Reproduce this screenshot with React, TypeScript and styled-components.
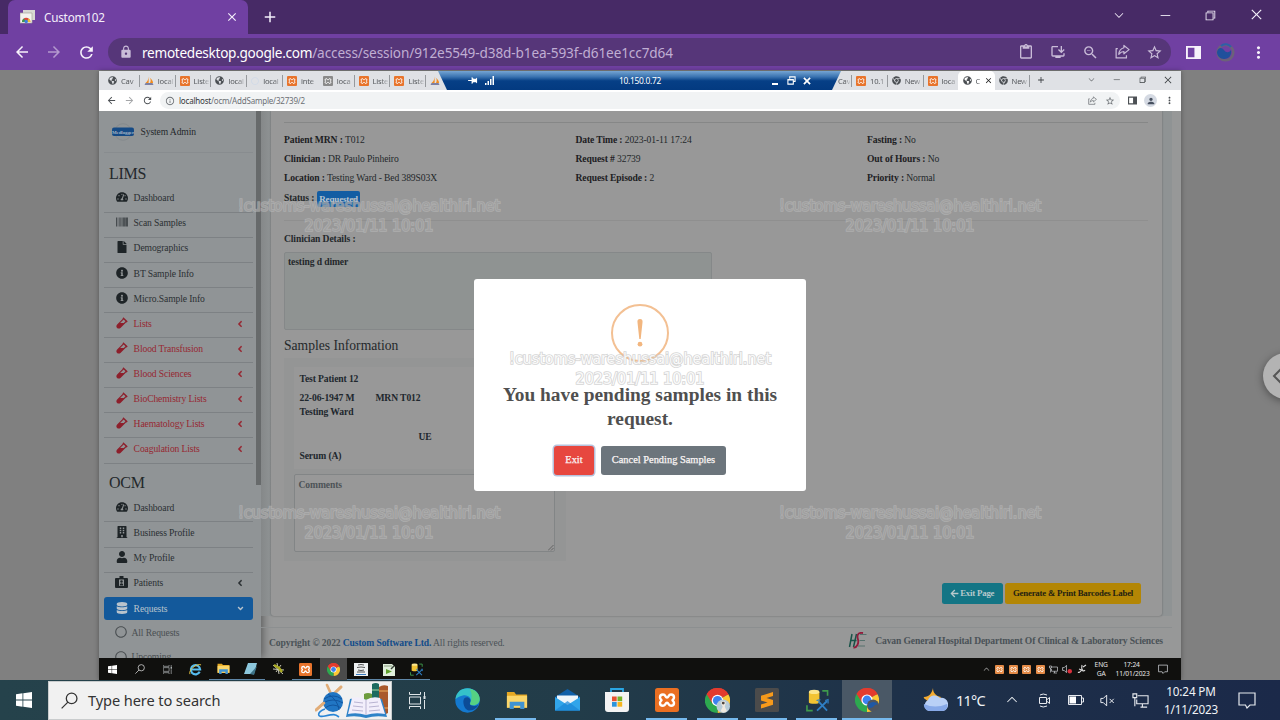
import React from 'react';
import styled, { createGlobalStyle, css } from 'styled-components';
import {
  FaTachometerAlt, FaBarcode, FaFile, FaInfoCircle, FaVial, FaBuilding, FaUser,
  FaDatabase, FaRegCircle, FaAngleLeft, FaAngleDown, FaArrowLeft, FaGlobeAmericas, FaChrome,
} from 'react-icons/fa';
import {
  MdArrowBack, MdArrowForward, MdRefresh, MdLock, MdContentPaste, MdInstallDesktop, MdZoomOut,
  MdStarBorder, MdMoreVert, MdClose, MdAdd, MdInfoOutline, MdPerson, MdPushPin,
} from 'react-icons/md';
import { VscChromeClose, VscChromeMinimize, VscChromeRestore, VscChevronDown, VscChevronUp } from 'react-icons/vsc';

const GlobalStyle = createGlobalStyle`
  *, *::before, *::after { box-sizing: border-box; }
  body { margin: 0; background: #808080; overflow: hidden; }
  svg { display: block; flex: none; }
`;

const ui = `"Noto Sans", "Open Sans", sans-serif`;
const serif = `"Liberation Serif", "Times New Roman", serif`;

const Screen = styled.div`
  position: relative;
  display: flex;
  flex-direction: column;
  width: 1280px;
  height: 720px;
  overflow: hidden;
  background: #808080;
  font-family: ${ui};
  white-space: nowrap;
`;

/* ---------- outer browser ---------- */
const TabStrip = styled.div`
  display: flex;
  height: 34px;
  padding-left: 8px;
  background: #472a66;
  color: #f4effa;
`;
const BrowserTab = styled.div`
  display: flex;
  align-items: center;
  width: 240px;
  padding: 0 9px 0 12px;
  border-radius: 7px 7px 0 0;
  background: #7040a2;
  font-size: 11.7px;
  letter-spacing: -0.2px;
`;
const TabTitle = styled.span`
  flex: 1;
  margin-left: 9px;
`;
const NewTab = styled.div`
  display: flex;
  align-items: center;
  margin-left: 13px;
`;
const WindowButtons = styled.div`
  display: flex;
  flex: 1;
  align-items: center;
  justify-content: flex-end;
  padding: 0 16px 5px 0;
  gap: 31.6px;
`;
const Toolbar = styled.div`
  display: flex;
  align-items: center;
  height: 36px;
  padding-left: 13px;
  background: #7040a2;
  color: #f7f2fb;
`;
const NavButtons = styled.div`
  display: flex;
  gap: 14px;
  width: 95px;
`;
const Dim = styled.span`
  opacity: 0.5;
`;
const Omnibox = styled.div`
  display: flex;
  align-items: center;
  width: 1063px;
  height: 28px;
  padding: 0 8px 0 11px;
  border-radius: 14px;
  background: #563679;
  color: #c9bcd8;
`;
const Url = styled.span`
  flex: 1;
  margin-left: 9px;
  font-size: 13.6px;
  letter-spacing: -0.12px;
  color: #c0aed3;
  b { font-weight: 400; color: #fff; letter-spacing: -0.28px; }
`;
const OmniIcons = styled.div`
  display: flex;
  gap: 16px;
`;
const ToolbarEnd = styled.div`
  display: flex;
  align-items: center;
  margin-left: 15px;
  gap: 14.5px;
`;

/* ---------- remote session ---------- */
const Session = styled.div`
  display: flex;
  height: 610px;
  padding: 1px 0 0 99px;
  background: #808080;
`;
const Remote = styled.div`
  display: flex;
  flex-direction: column;
  width: 1082px;
  height: 609px;
  box-shadow: 0 0 5px rgba(0, 0, 0, 0.35);
`;
const RemoteTabs = styled.div`
  display: flex;
  height: 19px;
  background: #dfe1e5;
  color: #55585c;
  font-size: 7.6px;
`;
const RemoteTab = styled.div<{ $w?: number; $active?: boolean; $line?: boolean; $tucked?: boolean }>`
  display: flex;
  flex: none;
  align-items: center;
  width: ${p => p.$w ?? 35.8}px;
  padding-left: ${p => (p.$tucked ? 0 : 4)}px;
  gap: 3px;
  ${p => p.$active && css`background: #fff; border-radius: 5px 5px 0 0; padding-left: 5px;`}
  span {
    flex: 1;
    min-width: 0;
    margin-left: ${p => (p.$tucked ? -3 : 1)}px;
    letter-spacing: -0.2px;
    -webkit-mask-image: linear-gradient(90deg, #000 55%, rgba(0, 0, 0, 0.15) 100%);
  }
  &::after {
    content: '';
    width: 1px;
    height: 12px;
    margin-left: -2px;
    background: ${p => (p.$line === false ? 'transparent' : '#96999d')};
  }
`;
const TabGroup = styled.div`
  display: flex;
  width: 339px;
  padding-left: 5px;
`;
const RdpBar = styled.div`
  display: flex;
  align-items: center;
  flex: none;
  width: 403px;
  height: 19px;
  padding: 0 30px 0 29px;
  background: linear-gradient(#76a5d3 0%, #3b74b1 30%, #063f86 52%, #033a80 100%);
  clip-path: polygon(0 0, 100% 0, calc(100% - 9px) 100%, 9px 100%);
  color: #fff;
`;
const RdpPin = styled.div`
  display: flex;
  align-items: center;
  width: 48px;
  gap: 7px;
  svg:first-child { transform: rotate(90deg); }
`;
const RdpTitle = styled.div`
  flex: 1;
  padding-right: 6px;
  text-align: center;
  font-size: 8.4px;
  letter-spacing: -0.3px;
`;
const RdpButtons = styled.div`
  display: flex;
  align-items: center;
  gap: 7.5px;
`;
const RemoteWindowButtons = styled.div`
  display: flex;
  flex: 1;
  align-items: center;
  justify-content: flex-end;
  gap: 16.5px;
  padding: 0 8px 2px 6px;
  color: #3c4043;
  svg:first-child { margin-right: auto; }
`;
const RemoteToolbar = styled.div`
  display: flex;
  align-items: center;
  height: 21px;
  padding-left: 7px;
  background: #fff;
  color: #4c5054;
`;
const RemoteNav = styled.div`
  display: flex;
  width: 54px;
  gap: 7px;
`;
const RemoteOmni = styled.div`
  display: flex;
  align-items: center;
  width: 960px;
  height: 17px;
  padding: 0 5px;
  border-radius: 9px;
  background: #f1f3f4;
  font-size: 8px;
  color: #6c7074;
`;
const RemoteUrl = styled.span`
  flex: 1;
  margin-left: 4px;
  letter-spacing: -0.2px;
  b { font-weight: 400; color: #33373a; }
`;
const RemoteOmniIcons = styled.div`
  display: flex;
  gap: 8px;
`;
const RemoteEnd = styled.div`
  display: flex;
  align-items: center;
  margin-left: 8px;
  gap: 7px;
`;
const Avatar = styled.div`
  display: flex;
  align-items: center;
  justify-content: center;
  width: 13px;
  height: 13px;
  border-radius: 50%;
  background: #d5dae3;
  color: #47505f;
`;

/* ---------- application ---------- */
const Page = styled.div`
  display: flex;
  height: 547px;
  overflow: hidden;
  background: #979898;
  font-family: ${serif};
  font-size: 9.6px;
  letter-spacing: -0.11px;
  color: #24282b;
`;
const Sidebar = styled.div`
  display: flex;
  width: 162px;
  height: 547px;
  overflow: hidden;
  background: #909496;
  box-shadow: 2px 0 8px rgba(0, 0, 0, 0.4);
`;
const Menu = styled.div`
  width: 157px;
  padding: 0 3px 0 5px;
`;
const ScrollThumb = styled.div`
  width: 5px;
  height: 374px;
  background: #676a6b;
`;
const UserRow = styled.div`
  display: flex;
  align-items: center;
  height: 42px;
  padding-left: 8px;
  gap: 6.5px;
  border-bottom: 1px solid #888c8f;
`;
const MenuHeading = styled.div<{ $h: number }>`
  display: flex;
  align-items: flex-end;
  height: ${p => p.$h}px;
  padding: 0 0 5px 5px;
  line-height: 18px;
  font-size: 16px;
  letter-spacing: -0.3px;
`;
const MenuItem = styled.div<{ $red?: boolean; $active?: boolean; $plain?: boolean }>`
  display: flex;
  align-items: center;
  height: 25.1px;
  padding: 0 8px 4.6px 11px;
  border-bottom: 1px solid ${p => (p.$plain ? 'transparent' : '#7d8184')};
  color: ${p => (p.$red ? '#972731' : '#2b3033')};
  ${p => p.$active && css`
    height: 22.5px;
    margin-top: -0.5px;
    padding-bottom: 1px;
    border: 0;
    border-radius: 3px;
    background: #13599b;
    color: #b9c3cc;
  `}
`;
const MenuIcon = styled.span<{ $color?: string }>`
  display: flex;
  justify-content: center;
  width: 13px;
  margin-right: 5.6px;
  color: ${p => p.$color ?? '#1e2427'};
`;
const MenuText = styled.span`
  flex: 1;
  padding-top: 1px;
`;
const MenuArrow = styled.span`
  padding-top: 2px;
`;
const SubItem = styled.div`
  display: flex;
  align-items: center;
  height: 24.5px;
  padding: 1px 0 0 11px;
  gap: 4.5px;
  color: #4a4f52;
`;
const Main = styled.div`
  display: flex;
  flex: 1;
  flex-direction: column;
`;
const CardArea = styled.div`
  width: 911px;
  height: 505px;
  padding: 0 10px;
  background: linear-gradient(90deg, #858889 0, #8f9394 10px, #8f9394 100%);
`;
const Card = styled.div`
  width: 891px;
  height: 505px;
  padding: 11px 14px 0 13px;
  border-radius: 0 0 3px 3px;
  background: #989898;
  box-shadow: 0 0 2px rgba(0, 0, 0, 0.35);
`;
const Rule = styled.div<{ $top?: number; $soft?: boolean }>`
  height: 1px;
  margin-top: ${p => p.$top ?? 0}px;
  background: ${p => (p.$soft ? '#8f8f8f' : '#868787')};
`;
const Facts = styled.div`
  display: grid;
  grid-template-columns: 291.5px 291.5px 1fr;
  grid-auto-rows: 19.2px;
  align-items: center;
  margin-top: 7px;
  b { color: #1d2023; }
`;
const StatusRow = styled.div`
  display: flex;
  align-items: center;
  height: 20.6px;
  gap: 2.5px;
  font-weight: 700;
`;
const StatusBadge = styled.span`
  width: 43.5px;
  height: 16.5px;
  margin-top: 2px;
  border-radius: 2px;
  background: #135da3;
  color: #b9c4ce;
  font-size: 9px;
  line-height: 17px;
  letter-spacing: -0.15px;
  text-align: center;
`;
const FieldLabel = styled.div`
  height: 14px;
  margin-top: 10.8px;
  font-weight: 700;
  line-height: 14px;
`;
const DetailsBox = styled.div`
  width: 428px;
  height: 78px;
  margin: 5.8px 0 0 -0.5px;
  padding: 2.5px 3.500px;
  border: 1px solid #858889;
  border-radius: 2px;
  background: #8f9392;
  font-weight: 700;
  line-height: 14px;
`;
const SectionTitle = styled.div`
  height: 18px;
  margin-top: 7.5px;
  font-size: 13.6px;
  line-height: 18px;
  letter-spacing: 0;
`;
const SampleBox = styled.div`
  display: flex;
  flex-direction: column;
  width: 282px;
  height: 203px;
  margin-top: 2.7px;
  padding: 9px 11px 0 10px;
  background: #949595;
  font-weight: 700;
`;
const SampleInfo = styled.div`
  height: 102px;
  padding: 5px 0 0 5.5px;
  background: #989898;
  color: #20272d;
`;
const SampleLine = styled.div<{ $h: number; $left?: number }>`
  display: flex;
  align-items: flex-start;
  height: ${p => p.$h}px;
  padding-left: ${p => p.$left ?? 0}px;
  line-height: 14px;
  gap: 21px;
`;
const CommentsBox = styled.div`
  display: flex;
  justify-content: space-between;
  height: 78px;
  margin-top: 5px;
  padding: 3px 0 0 3.5px;
  border: 1px solid #828586;
  border-radius: 2px;
  background: #989898;
  color: #4d5357;
  line-height: 14px;
  svg { align-self: flex-end; }
`;
const Actions = styled.div`
  display: flex;
  justify-content: flex-end;
  margin-top: 21.8px;
  padding-right: 7px;
  gap: 2.5px;
`;
const ActionButton = styled.div<{ $bg: string; $fg: string; $w: number }>`
  display: flex;
  align-items: center;
  justify-content: center;
  width: ${p => p.$w}px;
  height: 21px;
  gap: 1px;
  border-radius: 2.5px;
  background: ${p => p.$bg};
  color: ${p => p.$fg};
  font-size: 8.8px;
  font-weight: 700;
  letter-spacing: -0.2px;
`;
const Footer = styled.div`
  display: flex;
  align-items: center;
  justify-content: space-between;
  width: 911px;
  height: 31px;
  margin-top: 11px;
  padding: 0 9px 2px 8px;
  border-top: 1px solid #8c8f90;
  color: #4a5257;
`;
const Copyright = styled.div`
  a { color: #124c8a; }
`;
const Hospital = styled.div`
  display: flex;
  align-items: center;
  margin-top: -3px;
  gap: 8px;
  font-weight: 700;
`;

/* ---------- dialog ---------- */
const Dialog = styled.div`
  position: absolute;
  left: 474px;
  top: 278.5px;
  display: flex;
  flex-direction: column;
  align-items: center;
  width: 332px;
  height: 212.5px;
  padding-top: 25px;
  border-radius: 3px;
  background: #fff;
  font-family: ${serif};
`;
const WarningRing = styled.div`
  display: flex;
  align-items: center;
  justify-content: center;
  width: 58px;
  height: 58px;
  border: 2px solid #f3c093;
  border-radius: 50%;
  color: #f2b67f;
`;
const DialogTitle = styled.div`
  margin-top: 21.5px;
  color: #4f4f4f;
  font-size: 19.4px;
  font-weight: 700;
  line-height: 24px;
  text-align: center;
`;
const DialogActions = styled.div`
  display: flex;
  margin-top: 15px;
  gap: 6.5px;
`;
const DialogButton = styled.div<{ $w: number; $danger?: boolean }>`
  width: ${p => p.$w}px;
  height: 28.5px;
  border-radius: 3px;
  background: ${p => (p.$danger ? '#e7473f' : '#6c757c')};
  box-shadow: ${p => (p.$danger ? '0 0 0 1.5px #b6c3dd' : 'none')};
  color: #fbf5f5;
  font-size: 10.4px;
  line-height: 28.5px;
  text-align: center;
  -webkit-text-stroke: 0.25px currentColor;
`;

/* ---------- overlays ---------- */
const Watermark = styled.div<{ $x: number; $y: number; $light?: boolean }>`
  position: absolute;
  left: ${p => p.$x - 150}px;
  top: ${p => p.$y - 9}px;
  width: 300px;
  color: ${p => (p.$light ? 'rgba(255,255,255,.9)' : 'rgba(152,152,152,.6)')};
  font-family: "DejaVu Sans Condensed", "DejaVu Sans", sans-serif;
  font-stretch: condensed;
  font-size: 16px;
  line-height: 20px;
  text-align: center;
  paint-order: stroke;
  -webkit-text-stroke: 1.7px ${p => (p.$light ? 'rgba(200,200,200,.75)' : 'rgba(188,188,188,.6)')};
`;
const SidePull = styled.div`
  position: absolute;
  left: 1263px;
  top: 353px;
  width: 46px;
  height: 46px;
  padding: 15px 0 0 9px;
  border-radius: 50%;
  background: #b3b3b3;
  box-shadow: 0 2px 8px rgba(0, 0, 0, 0.4);
`;

/* ---------- task bars ---------- */
const RemoteTaskbar = styled.div`
  display: flex;
  align-items: center;
  height: 22px;
  background: #10100e;
  color: #e6e6e6;
`;
const RemoteTask = styled.div<{ $active?: boolean; $open?: boolean }>`
  display: flex;
  align-items: center;
  justify-content: center;
  width: 27.6px;
  height: 22px;
  background: ${p => (p.$active ? '#4b4b4b' : 'transparent')};
  box-shadow: ${p => (p.$open ? 'inset 0 -1px #5f87a8' : 'none')};
`;
const RemoteTray = styled.div`
  display: flex;
  flex: 1;
  align-items: center;
  justify-content: flex-end;
  gap: 4.4px;
  padding-right: 13px;
`;
const TinyStack = styled.div<{ $w: number; $gap?: number }>`
  width: ${p => p.$w}px;
  margin-right: ${p => p.$gap ?? 0}px;
  font-size: 6.7px;
  line-height: 9.5px;
  text-align: center;
  letter-spacing: -0.15px;
`;
const Taskbar = styled.div`
  display: flex;
  align-items: center;
  height: 40px;
  background: linear-gradient(90deg, #25424b 0%, #223c49 45%, #1e3149 70%, #1b2949 100%);
  color: #f0f3f6;
`;
const StartButton = styled.div`
  display: flex;
  align-items: center;
  justify-content: center;
  width: 48px;
`;
const SearchBox = styled.div`
  display: flex;
  align-items: center;
  width: 344px;
  height: 39px;
  padding: 0 2px 0 12px;
  border: 1px solid #c9cccd;
  background: #f1f1f1;
  color: #333;
  font-size: 14.6px;
  span { flex: 1; margin-left: 10px; letter-spacing: -0.1px; }
`;
const Task = styled.div<{ $open?: boolean; $active?: boolean }>`
  display: flex;
  align-items: center;
  justify-content: center;
  width: 50px;
  height: 40px;
  background: ${p => (p.$active ? '#4a5866' : 'transparent')};
  &::after {
    content: '';
    align-self: flex-end;
    width: ${p => (p.$active ? 50 : 41)}px;
    height: 2px;
    margin-left: -${p => (p.$active ? 37 : 33)}px;
    margin-right: -${p => (p.$active ? 13 : 8)}px;
    background: ${p => (p.$open ? '#76b9ed' : 'transparent')};
  }
`;
const Tray = styled.div`
  display: flex;
  align-items: center;
  flex: 1;
  padding-left: 31px;
`;
const TrayCell = styled.div<{ $w: number }>`
  display: flex;
  align-items: center;
  justify-content: center;
  width: ${p => p.$w}px;
`;
const Temp = styled.span`
  width: 41px;
  margin-left: 8px;
  font-size: 14.4px;
  letter-spacing: -0.7px;
`;
const Clock = styled.div`
  width: 68px;
  font-size: 11.7px;
  line-height: 18.5px;
  text-align: center;
  letter-spacing: -0.15px;
`;

/* ---------- drawings ---------- */
const Xampp = ({ s = 10, c = '#e8742c' }: { s?: number; c?: string }) => (
  <svg width={s} height={s} viewBox="0 0 24 24">
    <rect width="24" height="24" rx="2.5" fill={c} />
    <path d="M8 6.500c3 0 2 3 4 3s1-3 4-3c2 0 3 1.200 3 2.800 0 2-1.500 2.200-1.500 2.900s1.500.9 1.500 2.800c0 1.700-1.200 2.800-3 2.800-3 0-2-3-4-3s-1 3-4 3c-1.800 0-3-1.100-3-2.800 0-1.900 1.500-2.100 1.500-2.800S5 11.300 5 9.300c0-1.600 1-2.800 3-2.800z" fill="none" stroke="#fff" strokeWidth="2.400" />
  </svg>
);
const PhpMyAdmin = () => (
  <svg width="10" height="10" viewBox="0 0 20 20">
    <path d="M1 18h18l-2-4H3z" fill="#7d80a2" />
    <path d="M8 1c1 5 0 9-5 13h6c1-4 0-9-1-13zM11 3c3 3 3 7 1 11h6c0-5-3-8-7-11z" fill="#f28c1e" />
  </svg>
);
const ChromeLogo = ({ s, badge }: { s: number; badge?: 'photo' | 'swirl' }) => (
  <svg width={s} height={s} viewBox="0 0 24 24">
    <path d="M12 12 1.600 6A12 12 0 0 1 22.400 6z" fill="#e33b2e" />
    <path d="M12 12 22.400 6A12 12 0 0 1 12 24z" fill="#fcc934" />
    <path d="M12 12v12A12 12 0 0 1 1.600 6z" fill="#2da94f" />
    <path d="M12 6.500h10.700A12 12 0 0 0 1.600 6l5.600 9z" fill="#e33b2e" />
    <circle cx="12" cy="12" r="5.600" fill="#fff" />
    <circle cx="12" cy="12" r="4.400" fill="#3c82f0" />
    {badge === 'photo' && <><circle cx="17.500" cy="17.500" r="6.500" fill="#b8ccd8" /><path d="M15 14q3-3 5 0l-1 4 2 4q-3 3-6 0l2-4z" fill="#efe9df" /><circle cx="17.500" cy="14.500" r="1.400" fill="#4f4740" /></>}
    {badge === 'swirl' && <><circle cx="18" cy="17.500" r="6" fill="#4e5560" /><path d="M13 18c1-5 9-5 10-1-2-1-3 0-4.500 1.500S14 21 13 18z" fill="#1f58a5" /></>}
  </svg>
);
const Folder = ({ s }: { s: number }) => (
  <svg width={s} height={s * 0.85} viewBox="0 0 24 20">
    <path d="M1 1h8l2 2.500h12V18H1z" fill="#e5a823" />
    <path d="M1 5h22v13H1z" fill="#fbd66a" />
    <path d="M4 11.500h16V20h-4.500v-4h-7v4H4z" fill="#3f93d2" />
  </svg>
);
const DbTool = ({ s }: { s: number }) => (
  <svg width={s} height={s} viewBox="0 0 24 24" fill="none">
    <path d="M3 3v11c0 1.800 11 1.800 11 0V3z" fill="#f2c333" />
    <ellipse cx="8.500" cy="3" rx="5.500" ry="2.200" fill="#fbe58c" />
    <path d="M17 2h5.500v5M1 17v5.500h6" stroke="#3f9a4c" strokeWidth="1.700" />
    <path d="m13 13 9 9.500m0-10L11.500 22.500" stroke="#2f7fc4" strokeWidth="1.900" />
    <path d="m20 12 3-1v4m-12-3 4-1" stroke="#2f7fc4" strokeWidth="1.300" />
  </svg>
);
const Windows = ({ s }: { s: number }) => (
  <svg width={s} height={s} viewBox="0 0 16 16" fill="#fff">
    <path d="M0 2.200 6.500 1.300v6.300H0zM7.300 1.200 16 0v7.600H7.300zM0 8.400h6.500v6.300L0 13.800zM7.300 8.400H16V16l-8.700-1.200z" />
  </svg>
);
const Magnifier = ({ s, c }: { s: number; c: string }) => (
  <svg width={s} height={s} viewBox="0 0 16 16" fill="none" stroke={c} strokeWidth="1.200">
    <circle cx="10" cy="6" r="5" /><path d="M6.500 9.500.6 15.400" />
  </svg>
);
const TaskView = ({ s }: { s: number }) => (
  <svg width={s} height={s} viewBox="0 0 17 17" fill="none" stroke="#dfe5e8">
    <path d="M.5 0v2.500h11V0M.5 17v-2.500h11V17M.5 5h11v7H.5zM15.500 0v4M15.500 8v9" />
    <path d="M15.500 4v3" strokeWidth="2" />
  </svg>
);
const ShareIcon = ({ s }: { s: number }) => (
  <svg width={s} height={s} viewBox="0 0 16 16" fill="none" stroke="currentColor" strokeWidth="1.300">
    <path d="M3 5H1.200v9.800h11V12M9.500 1.500 15 6l-5.500 4.500V8C7 8 5.500 9 4 11c.3-3.500 2-6 5.500-7z" strokeLinejoin="round" />
  </svg>
);
const PanelIcon = ({ s, w = 2 }: { s: number; w?: number }) => (
  <svg width={s} height={s} viewBox="0 0 16 16" fill="currentColor">
    <path fillRule="evenodd" d={`M0 1h16v14H0zM${w} ${w + 1}v${14 - 2 * w}h7V${w + 1}z`} />
  </svg>
);
const Swirl = () => (
  <svg width="19" height="19" viewBox="0 0 19 19">
    <circle cx="9.500" cy="9.500" r="7.800" fill="none" stroke="#6c6179" strokeWidth="2.600" />
    <path d="M1 9c1-5 5-5 7-2s5 3 7 0c1 5-2 9-7 9-4 0-7-3-7-7z" fill="#20509c" />
    <path d="M5 3c3-3 8-2 10 1" fill="none" stroke="#2d5fa8" strokeWidth="2" />
  </svg>
);
const RemoteFavicon = () => (
  <svg width="15" height="14" viewBox="0 0 15 14">
    <path d="M3 0h12v10H3z" fill="#d8d8d2" /><path d="M0 3h12v10H0z" fill="#f4f3ee" stroke="#a8a89b" strokeWidth=".7" />
    <path d="M2 12a4.200 4.200 0 0 1 8.400 0z" fill="#dd4b38" /><path d="M2 12c0-2 1-3 2-3.500L6 12z" fill="#3c9a52" /><path d="M10.400 12c0-2-.6-2.700-1.600-3.500L6.500 12z" fill="#f0bf36" />
    <circle cx="6.200" cy="11.500" r="1.700" fill="#3e7fe0" />
  </svg>
);
const Edge = () => (
  <svg width="25" height="25" viewBox="0 0 24 24">
    <circle cx="12" cy="12" r="11.700" fill="#1479cf" />
    <path d="M.5 11C1 4 6 .3 12 .3c7 0 11.700 5 11.700 10.300 0 4-3 6-6 6-2.500 0-4-1-3-2.300C17 10 12 6 7.500 7.300 4 8.200 1.500 9.500.5 11z" fill="#35c1c9" />
    <path d="M14 1c6 1 9.700 5 9.700 9.600 0 4-3 6-6 6-2.500 0-4-1-3-2.300C17 9 16 4 14 1z" fill="#62d76b" opacity=".75" />
    <path d="M8 13c0-3 2-4.500 4.500-4 2 .5 2.800 2.500 2 4.500-1 2 .5 3.700 3.500 3.700 2 0 3.500-.5 4.300-1.200-.3 2-4.300 6-9.300 5.500C10 21 8 17 8 13z" fill="#0c4c97" />
  </svg>
);
const Mail = () => (
  <svg width="25" height="22" viewBox="0 0 25 22">
    <path d="M0 8 12.500 0 25 8v13.500H0z" fill="#0f5fa8" /><path d="M2 6.500h21V16H2z" fill="#eef5fa" />
    <path d="m0 8 12.500 8L25 8v13.500H0z" fill="#31a5ea" /><path d="M0 21.500 12.500 12 25 21.500z" fill="#1b86d6" opacity=".7" />
  </svg>
);
const Store = () => (
  <svg width="24" height="24" viewBox="0 0 24 24">
    <path d="M6 5V1h12v4" fill="none" stroke="#2aa6e4" strokeWidth="1.800" /><path d="M0 4h24v17q0 3-3 3H3q-3 0-3-3z" fill="#f3f3f3" />
    <path d="M7 8.500h4.700v4.700H7z" fill="#e75230" /><path d="M12.500 8.500h4.700v4.700h-4.700z" fill="#75b32a" /><path d="M7 14h4.700v4.700H7z" fill="#2a94dd" /><path d="M12.500 14h4.700v4.700h-4.700z" fill="#f6b51f" />
  </svg>
);
const Sublime = () => (
  <svg width="24" height="24" viewBox="0 0 24 24">
    <rect width="24" height="24" rx="1.500" fill="#4b4b4b" />
    <path d="M18 4 6 7.800v4.700l6.500 2L6 16.500v4l12-3.800V12l-6.500-2L18 8z" fill="#f79a1b" />
  </svg>
);
const SearchArt = () => (
  <svg width="74" height="37" viewBox="0 0 74 37">
    <path d="M57 2q4-2 7 0v30h-7z" fill="#1d6a5f" /><path d="M49 12q4-2 8 0v22h-8z" fill="#6d9c3c" /><path d="M64 5q4-3 9-1v27q-4 3-9 1z" fill="#a9592c" />
    <path d="M64 9h9M64 26h9" stroke="#d7924e" strokeWidth="1.500" /><path d="M57 8h7M49 18h8" stroke="#7ab48c" strokeWidth="1.500" />
    <path d="M1 28 26 5M12 3l9 20" stroke="#e2ad78" strokeWidth="2.600" strokeLinecap="round" />
    <circle cx="18" cy="20" r="10" fill="#2176c4" />
    <path d="M9 17q9-6 18 0M8 21q10-6 20 0M10 26q8-6 16 0M13 12q10 6 11 16" fill="none" stroke="#1256a0" />
    <path d="m1 28 8-7M22 9l4-4" stroke="#e2ad78" strokeWidth="2.600" strokeLinecap="round" />
    <path d="M10 27c-8 3-9 9 0 7s10-2 14 1" fill="none" stroke="#2a86d6" strokeWidth="1.600" />
    <path d="m31 35 4-18q8-2 16 2 8-4 16-2l5 18q-11-2-21 1-10-3-20-1z" fill="#2e83c8" />
    <path d="m33 32 4-16q8-2 14 2 6-4 14-2l5 16q-10-2-19 1-9-3-18-1z" fill="#f2eefb" />
    <path d="M51 18v15M39 20l9 1M38 24l10 1M37 28l11 1M54 21l9-1M54 25l10-1M54 29l11-1" stroke="#b9b4d2" />
  </svg>
);
const Weather = () => (
  <svg width="25" height="24" viewBox="0 0 25 24">
    <path d="M10 0c0 5 3 8 8 9-2 4-8 7-12 5-4-3-6-4-5-5C6 9 9 5 10 0z" fill="#f4ac31" />
    <path d="M6 23a6 6 0 0 1-1-11 7 7 0 0 1 12-2 6.500 6.500 0 0 1 3 13z" fill="#b9d0f6" /><path d="M6 23a6 6 0 0 1-5-7q11 5 23 0a5 5 0 0 1-5 7z" fill="#87a9e8" />
  </svg>
);
const Bubble = ({ s }: { s: number }) => (
  <svg width={s} height={s} viewBox="0 0 18 18" fill="none" stroke="#e6e9ee" strokeWidth="1.200"><path d="M1 2h16v12h-5l-3 3-1.500-3H1z" /></svg>
);
const Monitor = ({ s }: { s: number }) => (
  <svg width={s} height={s} viewBox="0 0 18 18" fill="none" stroke="#e6e9ee" strokeWidth="1.200"><path d="M6 4h11v8.500H5V8M9 16h7M11 12.500V16M1 2h4v4H1zM3 6v9" /></svg>
);
const Speaker = ({ s, red }: { s: number; red?: boolean }) => (
  <svg width={s} height={s} viewBox="0 0 18 18" fill="none" stroke="#e6e9ee" strokeWidth="1.200">
    <path d="M1 6.500h3L8 2.500v13l-4-4H1z" />{red ? <circle cx="14" cy="13" r="4" fill="#d9303c" stroke="none" /> : <path d="m11.500 7 5 5m0-5-5 5" />}
  </svg>
);
const HseLogo = () => (
  <svg width="19" height="17" viewBox="0 0 19 17" fill="none">
    <path d="M4 2 1.500 15M8.500 2l-3 13M2.500 8.500h6" stroke="#185348" strokeWidth="1.500" />
    <path d="M15 1C9 0 9 4 10 7.500S9 16 5.500 15.500" stroke="#921c3c" strokeWidth="1.800" />
    <path d="M12 2.500h6.500M11.500 8.500h5.500M10 14h7" stroke="#56716d" strokeWidth="1" />
  </svg>
);
const UserLogo = () => (
  <svg width="22" height="18" viewBox="0 0 22 18">
    <circle cx="11" cy="9" r="8.300" fill="none" stroke="#858a8d" />
    <rect y="4.500" width="22" height="8.500" rx="2" fill="#154a85" />
    <text x="11" y="10.800" textAnchor="middle" fontFamily="Liberation Serif" fontWeight="700" fontSize="5" letterSpacing="-0.1" fill="#a3b3c2">Medlogger</text>
  </svg>
);
const Resizer = () => <svg width="6" height="6" viewBox="0 0 6 6" stroke="#555" strokeWidth=".8"><path d="M5.500 0 0 5.500M5.500 3 3 5.500" /></svg>;
const IdCard = ({ size }: { size: number }) => (
  <svg width={size + 1} height={size} viewBox="0 0 13 12"><path fillRule="evenodd" fill="currentColor" d="M1 2h3.500V0h4v2H12q1 0 1 1v8q0 1-1 1H1q-1 0-1-1V3q0-1 1-1zm3 1.500v6.500h5V3.500zm2.500.7a1.300 1.300 0 1 1 0 2.600 1.300 1.300 0 0 1 0-2.600zM4.700 9.500q0-2.200 1.800-2.200t1.800 2.200z" /></svg>
);

/* ---------- data ---------- */
const Globe = () => <FaGlobeAmericas size={9} color="#4c5054" />;
const leftTabs: [React.ReactNode, string, boolean?][] = [
  [<Globe />, 'Cav'], [<PhpMyAdmin />, 'local'], [<Xampp />, 'Liste'], [<Globe />, 'local'],
  [<FaRegCircle size={8} color="#cfd9e8" />, 'local'], [<Xampp />, 'inte', false], [<Xampp c="#8a8a8a" />, 'loca'],
  [<Xampp />, 'Liste'], [<Xampp />, 'Liste'],
];
type Entry = [React.ComponentType<{ size: number }>, string, boolean?];
const lims: Entry[] = [
  [FaTachometerAlt, 'Dashboard'], [FaBarcode, 'Scan Samples'], [FaFile, 'Demographics'],
  [FaInfoCircle, 'BT Sample Info'], [FaInfoCircle, 'Micro.Sample Info'], [FaVial, 'Lists', true],
  [FaVial, 'Blood Transfusion', true], [FaVial, 'Blood Sciences', true], [FaVial, 'BioChemistry Lists', true],
  [FaVial, 'Haematology Lists', true], [FaVial, 'Coagulation Lists', true],
];
const ocm: Entry[] = [
  [FaTachometerAlt, 'Dashboard'], [FaBuilding, 'Business Profile'], [FaUser, 'My Profile'], [IdCard, 'Patients', true],
];
const facts: [string, string][] = [
  ['Patient MRN :', 'T012'], ['Date Time :', '2023-01-11 17:24'], ['Fasting :', 'No'],
  ['Clinician :', 'DR Paulo Pinheiro'], ['Request #', '32739'], ['Out of Hours :', 'No'],
  ['Location :', 'Testing Ward - Bed 389S03X'], ['Request Episode :', '2'], ['Priority :', 'Normal'],
];
const marks: [number, number, boolean?][] = [[369, 205], [910, 205], [640, 358, true], [369, 512], [910, 512]];

export default function App() {
  return (
    <Screen>
      <GlobalStyle />
      <TabStrip>
        <BrowserTab><RemoteFavicon /><TabTitle>Custom102</TabTitle><MdClose size={14} /></BrowserTab>
        <NewTab><MdAdd size={18} /></NewTab>
        <WindowButtons>
          <VscChevronDown size={14} /><VscChromeMinimize size={14} /><VscChromeRestore size={14} /><VscChromeClose size={15} />
        </WindowButtons>
      </TabStrip>
      <Toolbar>
        <NavButtons><MdArrowBack size={18} /><Dim><MdArrowForward size={18} /></Dim><MdRefresh size={19} /></NavButtons>
        <Omnibox>
          <MdLock size={14} />
          <Url><b>remotedesktop.google.com</b>/access/session/912e5549-d38d-b1ea-593f-d61ee1cc7d64</Url>
          <OmniIcons><MdContentPaste size={16} /><MdInstallDesktop size={16} /><MdZoomOut size={17} /><ShareIcon s={15} /><MdStarBorder size={17} /></OmniIcons>
        </Omnibox>
        <ToolbarEnd><PanelIcon s={15} /><Swirl /><MdMoreVert size={19} /></ToolbarEnd>
      </Toolbar>

      <Session>
        <Remote>
          <RemoteTabs>
            <TabGroup>
              {leftTabs.map(([icon, text, line], i) => <RemoteTab key={i} $line={line}>{icon}<span>{text}</span></RemoteTab>)}
              <RemoteTab $w={12} $line={false}><PhpMyAdmin /></RemoteTab>
            </TabGroup>
            <RdpBar>
              <RdpPin><MdPushPin size={11} /><svg width="9" height="9" viewBox="0 0 9 9" fill="#fff"><path d="M0 7h1.500v2H0zM2.500 5H4v4H2.500zM5 3h1.500v6H5zM7.500 0H9v9H7.500z" /></svg></RdpPin>
              <RdpTitle>10.150.0.72</RdpTitle>
              <RdpButtons>
                <svg width="8" height="10" viewBox="0 0 8 10"><path d="M1 8h6" stroke="#fff" strokeWidth="2" /></svg>
                <svg width="9" height="9" viewBox="0 0 10 10" fill="none" stroke="#fff"><path d="M3 3V1h6v5H7M1 4h6v5H1zM1 4.500h6" strokeWidth="1.200" /></svg>
                <svg width="8" height="8" viewBox="0 0 9 9" stroke="#fff" strokeWidth="1.900"><path d="m1 1 7 7m0-7L1 8" /></svg>
              </RdpButtons>
            </RdpBar>
            <RemoteTab $w={11} $tucked><span>Cav</span></RemoteTab>
            <RemoteTab><Xampp /><span>10.1</span></RemoteTab>
            <RemoteTab><FaChrome size={9} color="#4c5054" /><span>New</span></RemoteTab>
            <RemoteTab $w={34} $line={false}><Xampp /><span>loca</span></RemoteTab>
            <RemoteTab $w={37} $active $line={false}><Globe /><span>C</span><MdClose size={9} color="#222" /></RemoteTab>
            <RemoteTab><FaChrome size={9} color="#4c5054" /><span>New</span></RemoteTab>
            <RemoteWindowButtons><MdAdd size={10} /><VscChevronDown size={9} /><VscChromeMinimize size={9} /><VscChromeRestore size={9} /><VscChromeClose size={10} /></RemoteWindowButtons>
          </RemoteTabs>
          <RemoteToolbar>
            <RemoteNav><MdArrowBack size={11} /><Dim><MdArrowForward size={11} /></Dim><MdRefresh size={11} /></RemoteNav>
            <RemoteOmni>
              <MdInfoOutline size={10} />
              <RemoteUrl><b>localhost</b>/ocm/AddSample/32739/2</RemoteUrl>
              <RemoteOmniIcons><ShareIcon s={9} /><MdStarBorder size={10} /></RemoteOmniIcons>
            </RemoteOmni>
            <RemoteEnd><PanelIcon s={9} /><Avatar><MdPerson size={10} /></Avatar><MdMoreVert size={11} /></RemoteEnd>
          </RemoteToolbar>

          <Page>
            <Sidebar>
              <Menu>
                <UserRow><UserLogo />System Admin</UserRow>
                <MenuHeading $h={34.5}>LIMS</MenuHeading>
                {lims.map(([Icon, text, red]) => (
                  <MenuItem key={text} $red={red}>
                    <MenuIcon $color={red ? '#8d1f2b' : undefined}><Icon size={12} /></MenuIcon>
                    <MenuText>{text}</MenuText>{red && <MenuArrow><FaAngleLeft size={10} /></MenuArrow>}
                  </MenuItem>
                ))}
                <MenuHeading $h={33.8}>OCM</MenuHeading>
                {ocm.map(([Icon, text, more]) => (
                  <MenuItem key={text} $plain={more}>
                    <MenuIcon><Icon size={12} /></MenuIcon>
                    <MenuText>{text}</MenuText>{more && <MenuArrow><FaAngleLeft size={10} /></MenuArrow>}
                  </MenuItem>
                ))}
                <MenuItem $active><MenuIcon $color="#b9c3cc"><FaDatabase size={12} /></MenuIcon><MenuText>Requests</MenuText><MenuArrow><FaAngleDown size={9} /></MenuArrow></MenuItem>
                <SubItem><FaRegCircle size={12} />All Requests</SubItem>
                <SubItem><FaRegCircle size={12} />Upcoming</SubItem>
              </Menu>
              <ScrollThumb />
            </Sidebar>
            <Main>
              <CardArea>
                <Card>
                  <Rule />
                  <Facts>{facts.map(([k, v]) => <div key={k}><b>{k}</b> {v}</div>)}</Facts>
                  <StatusRow>Status :<StatusBadge>Requested</StatusBadge></StatusRow>
                  <Rule $top={11.8} $soft />
                  <FieldLabel>Clinician Details :</FieldLabel>
                  <DetailsBox>testing d dimer</DetailsBox>
                  <SectionTitle>Samples Information</SectionTitle>
                  <SampleBox>
                    <SampleInfo>
                      <SampleLine $h={19.5}>Test Patient 12</SampleLine>
                      <SampleLine $h={14}><span>22-06-1947 M</span><span>MRN T012</span></SampleLine>
                      <SampleLine $h={24.5}>Testing Ward</SampleLine>
                      <SampleLine $h={19} $left={119}>UE</SampleLine>
                      <SampleLine $h={14}>Serum (A)</SampleLine>
                    </SampleInfo>
                    <CommentsBox>Comments<Resizer /></CommentsBox>
                  </SampleBox>
                  <Actions>
                    <ActionButton $w={60.5} $bg="#137585" $fg="#b7c9cc"><FaArrowLeft size={9} />Exit Page</ActionButton>
                    <ActionButton $w={136} $bg="#b38605" $fg="#241f12">Generate &amp; Print Barcodes Label</ActionButton>
                  </Actions>
                </Card>
              </CardArea>
              <Footer>
                <Copyright><b>Copyright © 2022 <a>Custom Software Ltd.</a></b> All rights reserved.</Copyright>
                <Hospital><HseLogo />Cavan General Hospital Department Of Clinical &amp; Laboratory Sciences</Hospital>
              </Footer>
            </Main>
          </Page>

          <RemoteTaskbar>
            <RemoteTask><Windows s={9} /></RemoteTask>
            <RemoteTask><Magnifier s={10} c="#ddd" /></RemoteTask>
            <RemoteTask><TaskView s={9} /></RemoteTask>
            <RemoteTask>
              <svg width="13" height="13" viewBox="0 0 14 14" fill="none"><path d="M11.500 9.500A5 5 0 1 1 12 7H3" stroke="#57bdf0" strokeWidth="2.300" /><path d="M1 12C-1 8 8 0 13 2" stroke="#e9c640" /></svg>
            </RemoteTask>
            <RemoteTask $open><Folder s={13} /></RemoteTask>
            <RemoteTask $open><svg width="13" height="12" viewBox="0 0 13 12"><path d="M4 0h9l-3 11H0z" fill="#8cc7dc" /><path d="M6 11 13 3l-3 9z" fill="#3d7388" /></svg></RemoteTask>
            <RemoteTask><svg width="13" height="12" viewBox="0 0 13 12" fill="none"><path d="m1 2 10 9M1 6l11 1M5 0l2 11M9 2 4 9" stroke="#c9c9b5" /><path d="m2 2 5 3 3 4" stroke="#a9a922" strokeWidth="2.500" /></svg></RemoteTask>
            <RemoteTask $open><Xampp s={13} /></RemoteTask>
            <RemoteTask $active><ChromeLogo s={13} /></RemoteTask>
            <RemoteTask $open><svg width="14" height="13" viewBox="0 0 14 13"><path fill="#eef1f2" d="M0 0h14v13H0z" /><path d="M4 2q3-1 6 0M3 4.500q4-1 8 0M4 7q3 1 6 0M3 9h8" stroke="#555" fill="none" /><path d="M2 11.500h10" stroke="#3a7cc0" /></svg></RemoteTask>
            <RemoteTask $open><svg width="12" height="13" viewBox="0 0 12 13"><path fill="#dfeedb" d="M0 1h9l3 3v9H0z" /><path d="M1 3h8" stroke="#8a9a80" /><path d="M3 11V6l6 2.500z" fill="#5d9f2b" /><path d="m8 6 3-3" stroke="#353f35" strokeWidth="1.500" /></svg></RemoteTask>
            <RemoteTask $open><DbTool s={13} /></RemoteTask>
            <RemoteTray>
              <VscChevronUp size={9} /><Xampp s={9} c="#e58b46" /><Xampp s={9} c="#e58b46" /><Xampp s={9} c="#e58b46" /><Xampp s={9} c="#e58b46" />
              <Monitor s={9} /><Speaker s={10} red />
              <svg width="10" height="10" viewBox="0 0 10 10" fill="none" stroke="#ddd" strokeWidth="1.100"><path d="M1 8c2 2 3-3 5-2M2 5l5 2M5 1c-1 4 1 8 3 5M6 3l3-2" /></svg>
              <TinyStack $w={20}>ENG<br />GA</TinyStack><TinyStack $w={32} $gap={6}>17:24<br />11/01/2023</TinyStack>
              <Bubble s={10} />
            </RemoteTray>
          </RemoteTaskbar>
        </Remote>
      </Session>

      <Taskbar>
        <StartButton><Windows s={16} /></StartButton>
        <SearchBox><Magnifier s={17} c="#333" /><span>Type here to search</span><SearchArt /></SearchBox>
        <Task><TaskView s={17} /></Task>
        <Task><Edge /></Task>
        <Task $open><Folder s={22} /></Task>
        <Task><Mail /></Task>
        <Task><Store /></Task>
        <Task $open><Xampp s={24} c="#ea6f22" /></Task>
        <Task $open><ChromeLogo s={25} badge="photo" /></Task>
        <Task $open><Sublime /></Task>
        <Task $open><DbTool s={23} /></Task>
        <Task $open $active><ChromeLogo s={24} badge="swirl" /></Task>
        <Tray>
          <Weather /><Temp>11°C</Temp>
          <TrayCell $w={30}><VscChevronUp size={16} /></TrayCell>
          <TrayCell $w={34}><svg width="13" height="15" viewBox="0 0 13 15" fill="none" stroke="#e6e9ee"><path d="M1.500 4.500h7v6h-7zM8.500 7l3-2.500v6L8.500 8M2 2q3-2 7 0M2 13q3 2 7 0" /></svg></TrayCell>
          <TrayCell $w={30}><svg width="16" height="10" viewBox="0 0 16 10"><path d="M.5.5h13v9H.5zM14 3h1.500v4H14" fill="none" stroke="#e6e9ee" /><path d="M1.500 1.500h6.500v7H1.500z" fill="#fff" /></svg></TrayCell>
          <TrayCell $w={32}><Speaker s={15} /></TrayCell>
          <TrayCell $w={34}><Monitor s={17} /></TrayCell>
          <Clock>10:24 PM<br />1/11/2023</Clock>
          <TrayCell $w={44}><Bubble s={18} /></TrayCell>
        </Tray>
      </Taskbar>

      <Dialog>
        <WarningRing>
          <svg width="8" height="28" viewBox="0 0 8 28" fill="currentColor"><path d="M4 0c2.200 0 2.800 1.500 2.500 3.500L4.700 20H3.300L1.500 3.500C1.200 1.500 1.800 0 4 0z" /><circle cx="4" cy="25.200" r="2.400" /></svg>
        </WarningRing>
        <DialogTitle>You have pending samples in this<br />request.</DialogTitle>
        <DialogActions>
          <DialogButton $w={40.5} $danger>Exit</DialogButton>
          <DialogButton $w={125.5}>Cancel Pending Samples</DialogButton>
        </DialogActions>
      </Dialog>
      {marks.map(([x, y, light]) => (
        <Watermark key={`${x}-${y}`} $x={x} $y={y} $light={light}>!customs-wareshussai@healthirl.net<br />2023/01/11 10:01</Watermark>
      ))}
      <SidePull><svg width="10" height="16" viewBox="0 0 10 16" fill="none" stroke="#555" strokeWidth="2"><path d="M9 1 2 8l7 7" /></svg></SidePull>
    </Screen>
  );
}
